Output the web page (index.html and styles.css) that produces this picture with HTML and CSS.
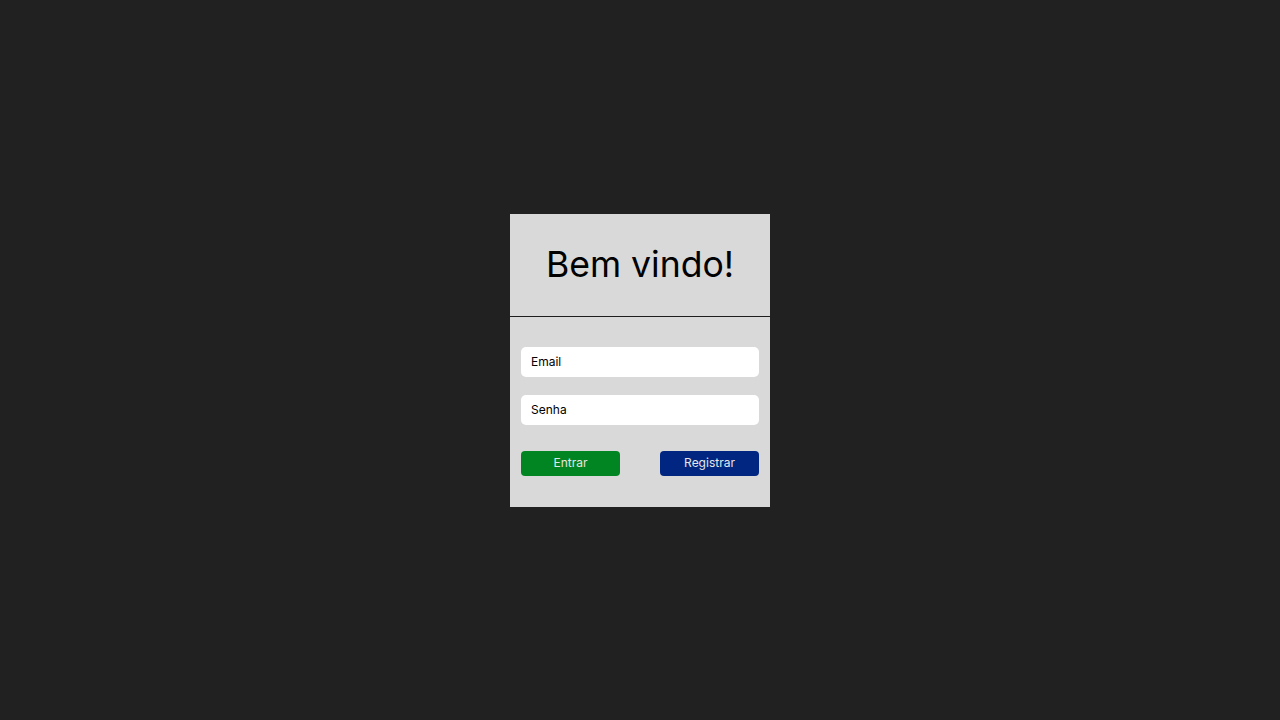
FILE: index.html
```html
<!DOCTYPE html>
<html lang="pt">
<head>
<meta charset="utf-8">
<title>Bem vindo</title>
<link rel="stylesheet" href="styles.css">
</head>
<body>
<main class="card">
  <header class="card-header">
    <h1 class="title">Bem vindo!</h1>
  </header>
  <form class="form">
    <input class="field" type="text" placeholder="Email">
    <input class="field field-second" type="password" placeholder="Senha">
    <div class="actions">
      <button type="button" class="btn btn-enter">Entrar</button>
      <button type="button" class="btn btn-register">Registrar</button>
    </div>
  </form>
</main>
</body>
</html>
```
FILE: styles.css
```css
* { box-sizing: border-box; }
html, body { height: 100%; }
body {
  margin: 0;
  background: #212121;
  font-family: Inter, "Noto Sans", sans-serif;
  display: flex;
  align-items: center;
  justify-content: center;
}
.card {
  width: 260px;
  height: 293px;
  background: #d9d9d9;
  display: flex;
  flex-direction: column;
}
.card-header {
  height: 103px;
  border-bottom: 1px solid #1e1e1e;
  display: flex;
  align-items: center;
  justify-content: center;
}
.title {
  margin: 0;
  font-size: 35.6px;
  font-weight: 400;
  color: #000;
  line-height: 1;
  padding-top: 1px;
}
.form {
  padding: 30px 11px 0;
  display: flex;
  flex-direction: column;
}
.field {
  height: 30px;
  width: 100%;
  border: none;
  border-radius: 5px;
  background: #fff;
  padding: 0 10px;
  font-family: Inter, "Noto Sans", sans-serif;
  font-size: 12px;
  color: #000;
  outline: none;
}
.field::placeholder { color: #000; opacity: 1; }
.field-second { margin-top: 18px; }
.actions {
  margin-top: 26px;
  display: flex;
  justify-content: space-between;
}
.btn {
  width: 99px;
  height: 25px;
  border: none;
  border-radius: 4px;
  font-family: Inter, "Noto Sans", sans-serif;
  font-size: 12px;
  color: #e6e6e6;
  padding: 0 0 2px;
  cursor: pointer;
}
.btn-enter { background: #008522; }
.btn-register { background: #002682; }
```
